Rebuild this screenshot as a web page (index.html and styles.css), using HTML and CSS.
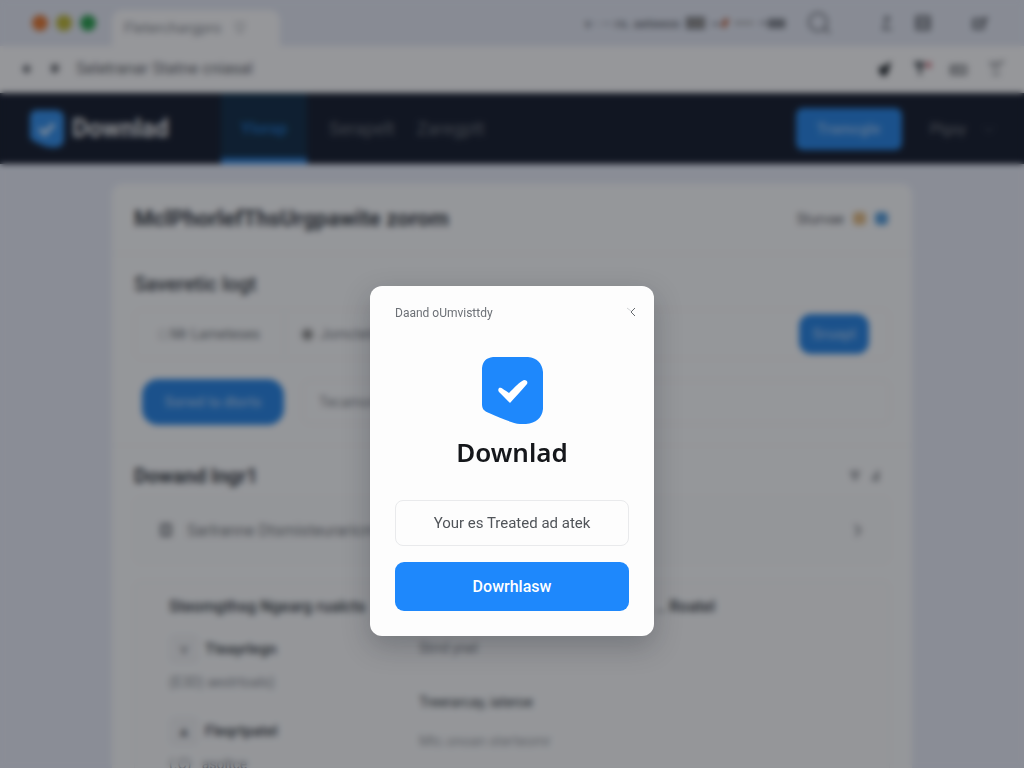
FILE: index.html
```html
<!DOCTYPE html>
<html lang="en">
<head>
    <meta charset="UTF-8">
    <meta name="viewport" content="width=device-width, initial-scale=1.0">
    <title>Downlad</title>
    <link rel="stylesheet" href="styles.css">
</head>
<body class="modal-open">
    <div class="page">
        <div class="tab-strip">
            <div class="lights">
                <span class="light red"></span>
                <span class="light yellow"></span>
                <span class="light green"></span>
            </div>
            <div class="tab">
                <span>Fleterchargpro</span>
                <svg width="14" height="14" viewBox="0 0 14 14" fill="none" stroke="currentColor" stroke-width="1"><path d="M2 2h10M3 4l2 7h4l2-7"/></svg>
            </div>
            <div class="strip-tools">
                <span class="strip-text">v &middot; -- rs. aeteeos</span>
                <svg class="strip-marks" width="106" height="16" viewBox="0 0 106 16" fill="none" stroke="currentColor" stroke-width="2">
                    <rect x="3" y="3" width="17" height="10" fill="#aaa59f"/>
                    <path d="M8 3v10M14 3v10M28 9h8"/>
                    <path d="M43 4l-4 8" stroke="#b8532c" stroke-width="4"/>
                    <path d="M51 8h18" stroke="#77736b" stroke-dasharray="5 2"/>
                    <path d="M76 8h6"/>
                    <rect x="85" y="5" width="15" height="7" fill="#8c909a"/>
                </svg>
                <svg class="search" width="26" height="26" viewBox="0 0 26 26" fill="none" stroke="currentColor" stroke-width="2"><circle cx="12" cy="12" r="9"/><path d="M18 18l6 5"/></svg>
                <svg class="person" width="18" height="18" viewBox="0 0 18 18" fill="none" stroke="currentColor" stroke-width="2"><circle cx="9" cy="5" r="2"/><path d="M4 15h10M7 9v6"/></svg>
                <svg class="grid" width="18" height="18" viewBox="0 0 18 18" fill="none" stroke="currentColor" stroke-width="3"><rect x="3" y="3" width="12" height="12"/><path d="M3 9h12"/></svg>
                <svg class="share" width="18" height="18" viewBox="0 0 18 18" fill="none" stroke="currentColor" stroke-width="3"><path d="M2 6h9v8H2zM11 10l4-7"/></svg>
            </div>
        </div>

        <div class="toolbar">
            <svg width="14" height="14" viewBox="0 0 14 14" fill="none" stroke="currentColor" stroke-width="3"><path d="M8 3L4 7l4 4M4 7h7"/></svg>
            <svg width="14" height="14" viewBox="0 0 14 14" fill="none" stroke="currentColor" stroke-width="3"><path d="M3 4h8M3 8h8M6 3v8"/></svg>
            <span>Seletranar Statne cniasal</span>
            <div class="toolbar-icons">
                <svg width="20" height="20" viewBox="0 0 20 20" fill="#2b3035"><path d="M4 8l5-1 7-5-2 9-3 6H7l-3-4z"/></svg>
                <svg width="20" height="20" viewBox="0 0 20 20" fill="none" stroke="#555a60" stroke-width="3"><path d="M2 4h10M4 7h8M8 4v12"/><path d="M14 6h5" stroke="#c75866" stroke-width="5"/></svg>
                <svg width="20" height="20" viewBox="0 0 20 20" fill="none" stroke="#6e7176" stroke-width="2"><path d="M2 7h15v8H2zM6 7v6M11 7v8"/></svg>
                <svg width="20" height="20" viewBox="0 0 20 20" fill="none" stroke="#85888d" stroke-width="2"><path d="M3 4h12M5 8h9M6 15h8M14 4l4-2"/></svg>
            </div>
        </div>

        <nav class="navbar">
            <a class="brand" href="#">
                <svg width="34" height="38" viewBox="0 0 60 67"><path d="M11 0H46Q60 1 60 15V52Q59 66 44 66H38Q28 66 7 55Q0 52 0 46V11Q1 1 11 0Z" fill="#3590ec"/><path d="M17 33l9 9 16-17" fill="none" stroke="#d4e8ff" stroke-width="7"/></svg>
                <span>Downlad</span>
            </a>
            <a class="nav-link active" href="#">Ylorap</a>
            <a class="nav-link" href="#">Serapelt</a>
            <a class="nav-link" href="#">Zaregptt</a>
            <button class="btn nav-btn">Tramcgle</button>
            <a class="account" href="#">Plgsy
                <svg width="14" height="14" viewBox="0 0 14 14" fill="none" stroke="#5c626d" stroke-width="1"><path d="M2 5l5 5 5-5"/></svg>
            </a>
        </nav>

        <main class="card">
            <header class="card-header">
                <h1>MclPhorlefThsUrgpawite zorom</h1>
                <span class="status">Sturvae</span>
                <span class="dot amber"></span>
                <span class="dot blue"></span>
            </header>

            <section class="filters">
                <h2>Saveretic logt</h2>
                <div class="filter-row">
                    <button class="field">&#9633; Mr Lameteses</button>
                    <label class="option"><input type="radio" name="kind" checked> Jomctetms</label>
                    <button class="btn small">Sruapl</button>
                </div>
                <div class="filter-row second">
                    <button class="btn wide">Sorwd ta dtorts</button>
                    <input class="search-field" type="text" value="Tecamorte" aria-label="Filter">
                </div>
            </section>

            <section class="downloads">
                <div class="section-title">
                    <h2>Dowand lngr1</h2>
                    <svg width="34" height="14" viewBox="0 0 34 14" fill="none" stroke="currentColor" stroke-width="2"><path d="M2 3h10M4 3l2 7h2l2-7M24 11l6-8v8h-5"/></svg>
                </div>
                <div class="notice">
                    <svg width="14" height="14" viewBox="0 0 14 14" fill="none" stroke="currentColor" stroke-width="3"><rect x="3" y="2" width="8" height="10"/></svg>
                    <span>Sarlranne Dtsmisteuraricme</span>
                    <svg class="notice-more" width="14" height="16" viewBox="0 0 14 16" fill="none" stroke="currentColor" stroke-width="2"><path d="M4 3l5 5-4 6"/></svg>
                </div>
                <div class="panel">
                    <div class="panel-title">
                        <span>Steomgthsg Ngearg rualcts</span>
                        <span>.. Roatel</span>
                    </div>
                    <div class="panel-columns">
                        <div>
                            <div class="item"><span class="item-icon">&#8910;</span>Tteayrlegn</div>
                            <div class="item-note">(E3D) aestrtoals)</div>
                            <div class="item"><span class="item-icon">&#9650;</span>Fleqrtpatel</div>
                            <div class="item-note">(.C) &nbsp; asoltce</div>
                        </div>
                        <div class="side-list">
                            <div class="muted">Strrd ynel</div>
                            <div class="entry">Treerarcay, iateroe</div>
                            <div class="faint">Mtc.onoan sterteomr</div>
                        </div>
                    </div>
                </div>
            </section>
        </main>
    </div>

    <div class="overlay">
        <div class="modal" role="dialog" aria-modal="true" aria-labelledby="modal-title">
            <div class="modal-header">
                <span>Daand oUmvisttdy</span>
                <button class="close" aria-label="Close">
                    <svg width="10" height="12" viewBox="0 0 10 12" fill="none" stroke="currentColor"><path d="M8 1L4 5l4 4"/><path d="M0 1l4 3" stroke="#d0d2d4"/></svg>
                </button>
            </div>
            <svg class="modal-logo" width="61" height="67" viewBox="0 0 61 67">
                <path d="M11 0H46C55 1 60 6 61 15V52C60 61 54 66 44 67H38C29 66 19 61 7 56C2 54 0 52 0 47V11C1 4 4 1 11 0Z" fill="#1e88fc"/>
                <path d="M17 31C19 30 21 32 27 36C32 31 37 25 42 23C45 23 46 25 45 27C40 33 34 39 28 46C25 43 20 38 17 35C16 34 16 32 17 31Z" fill="#fff"/>
            </svg>
            <h2 id="modal-title">Downlad</h2>
            <input class="modal-input" type="text" value="Your es Treated ad atek" aria-label="Source">
            <button class="modal-btn">Dowrhlasw</button>
        </div>
    </div>
</body>
</html>
```
FILE: styles.css
```css
* {
    box-sizing: border-box;
}
body {
    margin: 0;
    background: #e9edf9;
    color: #3a3f47;
    font-family: Roboto, "Liberation Sans", sans-serif;
    font-size: 16px;
}
.modal-open {
    height: 100vh;
    overflow: hidden;
}
h1, h2 {
    margin: 0;
}
a {
    color: inherit;
    text-decoration: none;
}
button, input {
    font-family: inherit;
    margin: 0;
}
svg {
    display: block;
    flex: none;
}

/* Browser frame */
.tab-strip {
    display: flex;
    align-items: center;
    height: 46px;
    padding: 0 34px 0 32px;
    background: #e5e9f5;
    color: #6c7078;
}
.lights {
    display: flex;
    gap: 8px;
}
.light {
    width: 16px;
    height: 16px;
    border-radius: 50%;
}
.light.red {
    background: #e27a38;
}
.light.yellow {
    background: #bdb63a;
}
.light.green {
    background: #2ea052;
}
.tab {
    display: flex;
    align-items: center;
    align-self: flex-end;
    gap: 12px;
    width: 168px;
    height: 36px;
    margin-left: 16px;
    padding: 0 12px;
    border-radius: 10px 10px 0 0;
    background: #fdfdff;
    color: #8c9097;
    font-size: 15px;
}
.strip-tools {
    display: flex;
    align-items: center;
    margin-left: auto;
}
.strip-text {
    color: #7c8089;
    font-size: 13px;
    font-weight: bold;
}
.strip-marks {
    margin-left: 4px;
}
.search {
    margin-left: 16px;
}
.person {
    margin-left: 46px;
}
.grid {
    margin-left: 18px;
}
.share {
    margin-left: 40px;
}
.toolbar {
    display: flex;
    align-items: center;
    gap: 14px;
    height: 47px;
    padding: 0 18px 2px 20px;
    background: #fdfdff;
    color: #66696f;
}
.toolbar-icons {
    display: flex;
    gap: 17px;
    margin-left: auto;
}

/* Site navigation */
.navbar {
    display: flex;
    align-items: center;
    height: 71px;
    padding: 0 28px 0 30px;
    background: #192031;
    color: #6b707a;
}
.brand {
    display: flex;
    align-items: center;
    gap: 8px;
    width: 191px;
    color: #e6e7ea;
    font-size: 25px;
    font-weight: bold;
}
.nav-link {
    display: flex;
    align-items: center;
    height: 100%;
    margin-left: 22px;
    font-size: 18px;
}
.nav-link.active {
    justify-content: center;
    width: 86px;
    margin-left: 0;
    border-bottom: 6px solid #2f83dc;
    padding-top: 6px;
    background: #15304a;
    color: #1f69b4;
    font-size: 16px;
    font-weight: bold;
}
.btn {
    border: none;
    border-radius: 12px;
    background: #2a86e6;
    color: #8fbdf0;
    font-size: 15px;
    font-weight: bold;
}
.nav-btn {
    width: 106px;
    height: 42px;
    margin-left: auto;
    border-radius: 7px;
}
.account {
    display: flex;
    align-items: center;
    gap: 16px;
    margin-left: 28px;
    color: #787c84;
    font-size: 15px;
}

/* Content card */
.card {
    max-width: 800px;
    margin: 20px auto 0;
    border-radius: 10px;
    background: #fcfdff;
}
.card-header {
    display: flex;
    align-items: center;
    height: 70px;
    padding: 0 24px 0 22px;
    border-bottom: 1px solid #f2f3f6;
}
.card-header h1 {
    flex: 1;
    font-size: 22px;
}
.status {
    color: #5c6067;
    font-size: 14px;
}
.dot {
    width: 13px;
    height: 13px;
    margin-left: 9px;
    border-radius: 4px;
}
.dot.amber {
    background: #e3bd88;
}
.dot.blue {
    background: #5a9fdb;
}
.filters {
    padding: 18px 22px 0;
}
h2 {
    font-size: 20px;
    line-height: 24px;
}
.filters h2 {
    font-weight: 500;
}
.filter-row {
    display: flex;
    align-items: center;
    height: 50px;
    margin-top: 13px;
    border: 1px solid #f2f3f6;
    border-radius: 8px;
}
.filter-row.second {
    height: 46px;
    margin-top: 20px;
    padding-left: 8px;
    border: none;
}
.field {
    width: 150px;
    height: 48px;
    border: none;
    border-right: 1px solid #ecedf0;
    background: none;
    color: #72767c;
    font-size: 14px;
}
.option {
    display: flex;
    align-items: center;
    gap: 6px;
    margin-left: 16px;
    color: #7b8087;
    font-size: 14px;
}
.option input {
    accent-color: #777;
}
.btn.small {
    width: 70px;
    height: 40px;
    margin-left: auto;
    margin-right: 20px;
}
.btn.wide {
    width: 142px;
    height: 46px;
    border-radius: 16px;
    font-size: 14px;
}
.search-field {
    flex: 1;
    height: 44px;
    margin-left: 18px;
    padding: 0 16px;
    border: 1px solid #eff0f3;
    border-radius: 8px;
    background: none;
    color: #85888e;
    font-size: 14px;
}
.downloads {
    margin-top: 20px;
    padding: 18px 22px 0;
    border-top: 1px solid #f4f5f8;
}
.section-title {
    display: flex;
    align-items: center;
    justify-content: space-between;
    padding-right: 8px;
}
.section-title svg {
    color: #8a8d93;
}
.notice {
    display: flex;
    align-items: center;
    gap: 14px;
    height: 66px;
    margin-top: 9px;
    padding: 0 24px;
    border: 1px solid #f2f3f6;
    border-radius: 8px;
    background: #fafbfd;
    color: #7a7e84;
}
.notice-more {
    margin-left: auto;
}
.panel {
    margin-top: 18px;
    padding: 15px 34px;
    border: 1px solid #f2f3f6;
    border-radius: 8px;
    background: #fbfcfe;
}
.panel-title {
    display: flex;
    justify-content: space-between;
    padding-right: 140px;
    line-height: 20px;
    font-weight: 500;
}
.panel-columns {
    display: grid;
    grid-template-columns: 250px 1fr;
    margin-top: 10px;
}
.item {
    display: flex;
    align-items: center;
    gap: 6px;
    height: 44px;
    font-size: 15px;
    font-weight: 500;
}
.item-icon {
    width: 30px;
    height: 30px;
    border-radius: 6px;
    background: #f3f4f7;
    color: #666a70;
    font-size: 14px;
    line-height: 30px;
    text-align: center;
}
.item-note {
    height: 38px;
    color: #8c9097;
    font-size: 14px;
    line-height: 22px;
}
.side-list {
    padding-top: 9px;
    font-size: 14px;
}
.muted {
    height: 54px;
    line-height: 24px;
    color: #7c8087;
}
.entry {
    height: 39px;
    line-height: 24px;
}
.faint {
    line-height: 24px;
    color: #a1a4a9;
}

/* Download dialog */
.overlay {
    position: fixed;
    inset: 0;
    display: flex;
    justify-content: center;
    align-items: flex-start;
    padding-top: 286px;
    background: rgba(8, 10, 14, 0.42);
    backdrop-filter: blur(3px);
}
.modal {
    display: flex;
    flex-direction: column;
    align-items: center;
    width: 284px;
    padding: 16px 25px 25px;
    border-radius: 12px;
    background: #fdfdfd;
    box-shadow: 0 10px 28px rgba(20, 24, 32, 0.25);
}
.modal-header {
    display: flex;
    align-items: center;
    justify-content: space-between;
    width: 100%;
    height: 22px;
    color: #6c7076;
    font-size: 12px;
}
.close {
    padding: 0;
    margin-right: -8px;
    border: none;
    background: none;
    color: #65696e;
}
.modal-logo {
    margin-top: 33px;
}
.modal h2 {
    margin-top: 10px;
    color: #15171b;
    font-family: "Noto Sans", sans-serif;
    font-size: 26px;
    font-weight: 600;
    line-height: 36px;
}
.modal-input {
    width: 100%;
    height: 46px;
    margin-top: 30px;
    border: 1px solid #e9eaec;
    border-radius: 8px;
    background: #fdfdfd;
    color: #505459;
    font-size: 15px;
    text-align: center;
}
.modal-btn {
    width: 100%;
    height: 49px;
    margin-top: 16px;
    border: none;
    border-radius: 9px;
    background: #1e88fc;
    color: #fff;
    font-size: 16px;
    font-weight: 500;
}
```
